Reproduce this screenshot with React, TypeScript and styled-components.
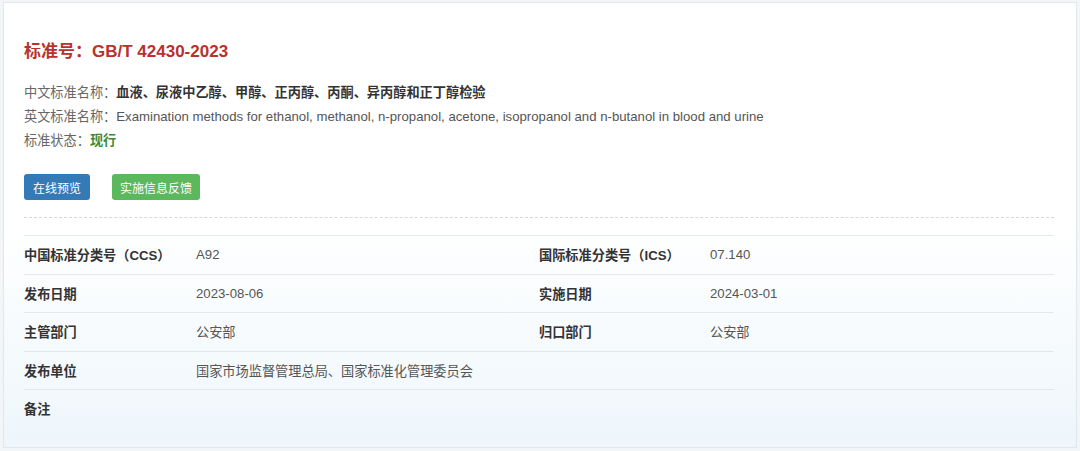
import { ReactElement } from 'react';
import styled, { createGlobalStyle } from 'styled-components';

const GlobalStyle = createGlobalStyle`
  html, body {
    margin: 0;
    padding: 0;
    background: #f4f7f9;
  }
  body {
    font-family: "Liberation Sans", Arial, "Noto Sans CJK SC", sans-serif;
    color: #333;
  }
`;

const Page = styled.div`
  width: 1080px;
  height: 451px;
  padding: 2px 3px 3px 3px;
  box-sizing: border-box;
  background: #f3f6f8;
`;

const Panel = styled.div`
  height: 100%;
  box-sizing: border-box;
  border: 1px solid #e1e7eb;
  background: linear-gradient(to bottom, #ffffff 0%, #ffffff 50%, #eef6fb 100%);
  padding: 36px 22px 0 20px;
`;

const Title = styled.h2`
  margin: 0 0 16px;
  font-size: 17px;
  font-weight: 700;
  color: #b8322c;
  line-height: 26px;
`;

const InfoLine = styled.div`
  font-size: 13.2px;
  line-height: 24px;
  color: #666;
`;

const InfoValue = styled.span<{ $tone?: 'strong' | 'green' | 'plain' }>`
  color: ${({ $tone }) => ($tone === 'green' ? '#3c8a3c' : $tone === 'strong' ? '#333' : '#555')};
  font-weight: ${({ $tone }) => ($tone === 'plain' ? 400 : 700)};
`;

const Actions = styled.div`
  display: flex;
  gap: 22px;
  margin-top: 21px;
`;

const Button = styled.button<{ $variant: 'blue' | 'green' }>`
  width: ${({ $variant }) => ($variant === 'blue' ? '66px' : '88px')};
  height: 26px;
  padding: 0;
  border: none;
  border-radius: 3px;
  font-family: inherit;
  font-size: 12px;
  color: #fff;
  background: ${({ $variant }) => ($variant === 'blue' ? '#337ab7' : '#5cb85c')};
  cursor: pointer;
`;

const Divider = styled.div`
  margin-top: 17px;
  border-top: 1px dashed #d6dadd;
`;

const Table = styled.div`
  margin-top: 17px;
  display: grid;
  grid-template-columns: 172px 343px 171px 1fr;
  border-top: 1px solid #e4e8eb;
`;

const Cell = styled.div<{ $label?: boolean; $last?: boolean }>`
  height: 37.5px;
  display: flex;
  align-items: center;
  font-size: 13.2px;
  color: ${({ $label }) => ($label ? '#333' : '#555')};
  font-weight: ${({ $label }) => ($label ? 700 : 400)};
  border-bottom: ${({ $last }) => ($last ? 'none' : '1px solid #e4e8eb')};
`;

const rows: [string, string, string, string][] = [
  ['中国标准分类号（CCS）', 'A92', '国际标准分类号（ICS）', '07.140'],
  ['发布日期', '2023-08-06', '实施日期', '2024-03-01'],
  ['主管部门', '公安部', '归口部门', '公安部'],
  ['发布单位', '国家市场监督管理总局、国家标准化管理委员会', '', ''],
  ['备注', '', '', ''],
];

const App = (): ReactElement => {
  return (
    <Page>
      <GlobalStyle />
      <Panel>
        <Title>标准号：GB/T 42430-2023</Title>
        <InfoLine>
          中文标准名称：<InfoValue $tone="strong">血液、尿液中乙醇、甲醇、正丙醇、丙酮、异丙醇和正丁醇检验</InfoValue>
        </InfoLine>
        <InfoLine>
          英文标准名称：
          <InfoValue $tone="plain">
            Examination methods for ethanol, methanol, n-propanol, acetone, isopropanol and n-butanol in blood and urine
          </InfoValue>
        </InfoLine>
        <InfoLine>
          标准状态：<InfoValue $tone="green">现行</InfoValue>
        </InfoLine>
        <Actions>
          <Button $variant="blue">在线预览</Button>
          <Button $variant="green">实施信息反馈</Button>
        </Actions>
        <Divider />
        <Table>
          {rows.map((row, i) =>
            row.map((text, j) => (
              <Cell key={`${i}-${j}`} $label={j % 2 === 0} $last={i === rows.length - 1}>
                {text}
              </Cell>
            )),
          )}
        </Table>
      </Panel>
    </Page>
  );
};

export default App;
